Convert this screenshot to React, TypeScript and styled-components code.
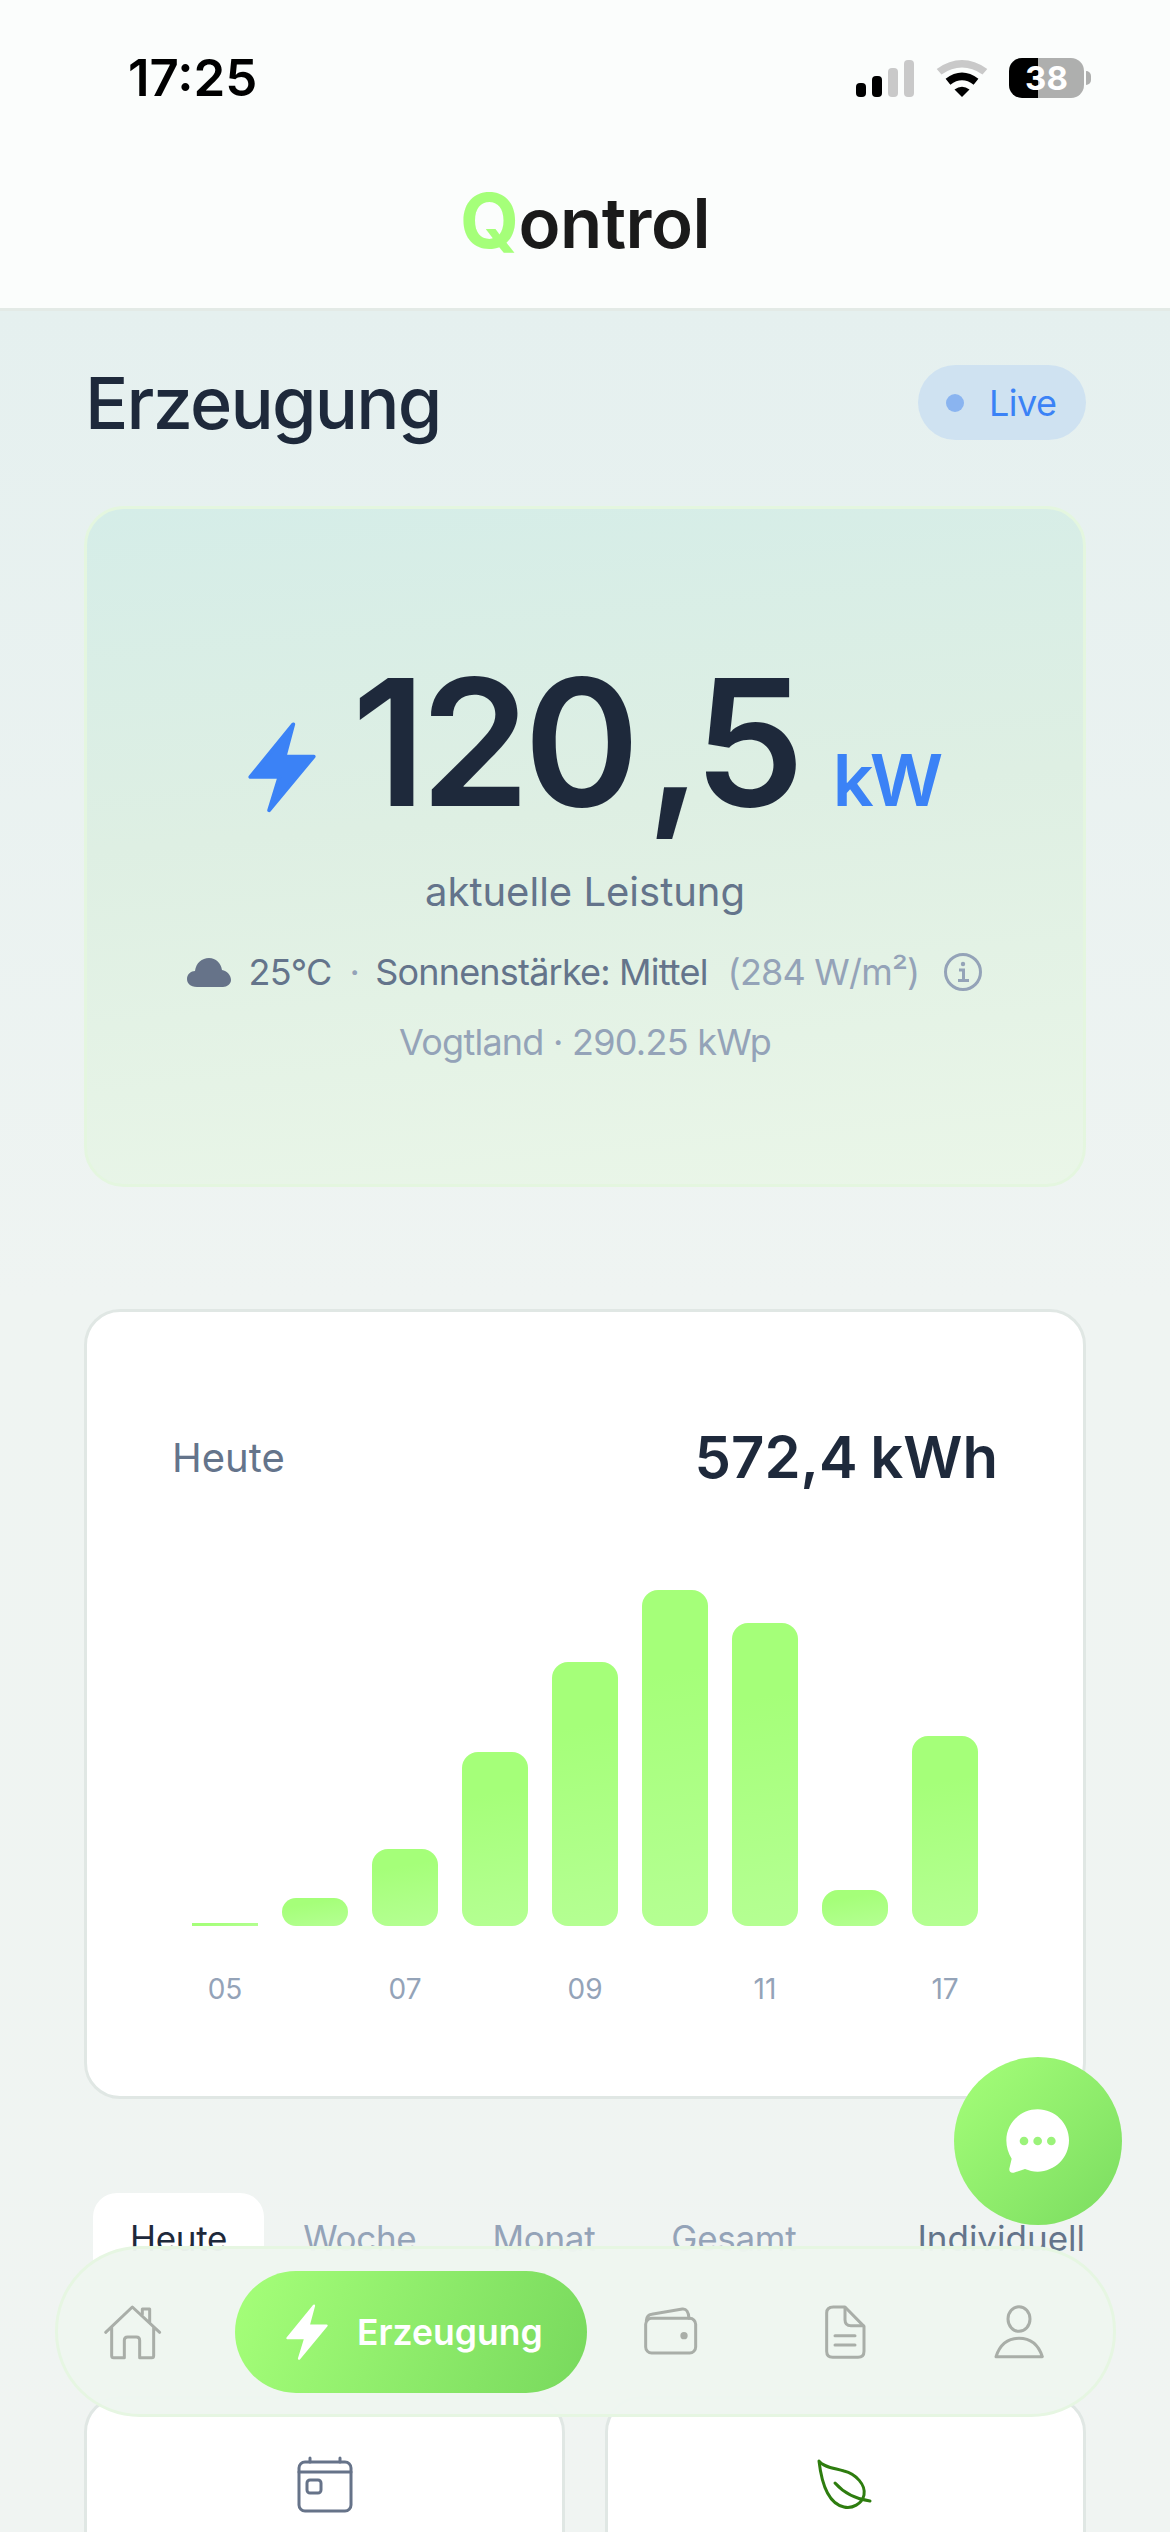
import React from "react";
import styled, { createGlobalStyle } from "styled-components";

const Global = createGlobalStyle`
  html, body { margin: 0; padding: 0; background: #EFF4F2; }
  * { box-sizing: border-box; }
  body { font-family: "Inter", "Liberation Sans", sans-serif; }
`;

const Screen = styled.div`
  position: relative;
  width: 1170px;
  height: 2532px;
  overflow: hidden;
  background: linear-gradient(180deg, #e5f0ef 0, #e5f0ef 310px, #eff4f2 1300px, #f0f4f2 100%);
`;

const Header = styled.header`
  height: 311px;
  background: #fbfdfc;
  border-bottom: 3px solid #e3eae6;
  display: flex;
  flex-direction: column;
`;

const StatusBar = styled.div`
  height: 150px;
  padding: 50px 86px 0 128px;
  display: flex;
  justify-content: space-between;
  align-items: flex-start;
`;

const Time = styled.span`
  font-size: 51px;
  line-height: 56px;
  font-weight: 600;
  color: #000;
`;

const StatusIcons = styled.div`
  display: flex;
  align-items: center;
  height: 46px;
  margin-top: 5px;
`;

const SignalSvg = styled.svg`
  width: 60px;
  height: 40px;
`;

const WifiSvg = styled.svg`
  width: 54px;
  height: 40px;
  margin-left: 20px;
`;

const Battery = styled.div`
  position: relative;
  margin-left: 20px;
  width: 75px;
  height: 40px;
  border-radius: 13px;
  background: linear-gradient(90deg, #000 39%, #aeafae 39%);
  color: #fff;
  font-size: 33px;
  line-height: 40px;
  font-weight: 700;
  text-align: center;
  &::after {
    content: "";
    position: absolute;
    right: -7px;
    top: 13px;
    width: 5px;
    height: 14px;
    border-radius: 0 7px 7px 0;
    background: #aeafae;
  }
`;

const Logo = styled.div`
  text-align: center;
  font-size: 69px;
  line-height: 80px;
  font-weight: 600;
  color: #1a1a1a;
  letter-spacing: -0.5px;
  margin-top: 30px;
`;

const LogoQ = styled.span`
  color: #a5ff79;
  font-size: 76px;
  font-weight: 700;
`;

const Main = styled.main`
  padding: 0 84px;
`;

const TitleRow = styled.div`
  display: flex;
  justify-content: space-between;
  align-items: center;
  height: 75px;
  margin-top: 54px;
  padding-left: 1px;
`;

const Title = styled.h1`
  margin: 0;
  font-size: 72px;
  font-weight: 500;
  color: #1e293b;
  letter-spacing: -1.8px;
`;

const LivePill = styled.div`
  width: 168px;
  height: 75px;
  border-radius: 38px;
  background: #cfe2f1;
  display: flex;
  align-items: center;
  padding-left: 28px;
  gap: 25px;
  color: #3b82f6;
  font-size: 36px;
  letter-spacing: -0.5px;
`;

const LiveDot = styled.span`
  width: 18px;
  height: 18px;
  border-radius: 50%;
  background: #8ab4f0;
`;

const HeroCard = styled.section`
  margin-top: 66px;
  height: 681px;
  border: 3px solid #e4f6df;
  border-radius: 40px;
  background: linear-gradient(175deg, #d5ede8 0%, #deefe3 45%, #eaf6e8 100%);
  display: flex;
  flex-direction: column;
  align-items: center;
  padding-top: 138px;
`;

const ValueRow = styled.div`
  display: flex;
  align-items: baseline;
  height: 190px;
  padding-left: 15px;
`;

const BoltHero = styled.svg`
  width: 72px;
  height: 94px;
  align-self: center;
  margin: 50px 34px 0 0;
`;

const Value = styled.span`
  font-size: 176px;
  line-height: 190px;
  font-weight: 600;
  color: #1e293b;
  letter-spacing: -6px;
`;

const Comma = styled.span`
  margin: 0 -2px 0 12px;
`;

const Unit = styled.span`
  font-size: 72px;
  font-weight: 600;
  color: #3b82f6;
  margin-left: 34px;
  letter-spacing: -4px;
`;

const Subtitle = styled.div`
  margin-top: 30px;
  font-size: 40px;
  line-height: 50px;
  color: #64748b;
`;

const WeatherRow = styled.div`
  margin-top: 32px;
  display: flex;
  align-items: center;
  font-size: 36px;
  line-height: 46px;
  color: #64748b;
  letter-spacing: -0.8px;
`;

const CloudSvg = styled.svg`
  width: 44px;
  height: 32px;
  margin-right: 18px;
`;

const Sep = styled.span`
  color: #94a3b8;
  margin: 0 16px 0 18px;
`;

const Muted = styled.span`
  color: #94a3b8;
  margin-left: 20px;
`;

const InfoSvg = styled.svg`
  width: 40px;
  height: 40px;
  margin-left: 24px;
`;

const Location = styled.div`
  margin-top: 24px;
  font-size: 36px;
  line-height: 46px;
  color: #94a3b8;
  letter-spacing: -0.75px;
`;

const ChartCard = styled.section`
  margin-top: 122px;
  height: 790px;
  border: 3px solid #e0e7e4;
  border-radius: 36px;
  background: #fff;
  padding: 115px 85px 0;
`;

const ChartHead = styled.div`
  display: flex;
  justify-content: space-between;
  align-items: center;
  height: 60px;
`;

const ChartLabel = styled.span`
  font-size: 40px;
  color: #64748b;
`;

const ChartTotal = styled.span`
  font-size: 58px;
  font-weight: 600;
  color: #1e293b;
  word-spacing: -2px;
`;

const Bars = styled.div`
  height: 358px;
  margin-top: 81px;
  padding: 0 20px;
  display: grid;
  grid-template-columns: repeat(9, 66px);
  justify-content: space-between;
  align-items: end;
`;

const Bar = styled.div<{ $h: number }>`
  height: ${(p) => p.$h}px;
  border-radius: ${(p) => (p.$h < 5 ? 0 : 16)}px;
  background: linear-gradient(170deg, #a5ff79 25%, #b5ff93 100%);
`;

const Labels = styled.div`
  margin-top: 45px;
  padding: 0 20px;
  display: grid;
  grid-template-columns: repeat(9, 66px);
  justify-content: space-between;
`;

const HourLabel = styled.span`
  text-align: center;
  font-size: 28px;
  line-height: 36px;
  color: #94a3b8;
`;

const TabRow = styled.div`
  margin-top: 94px;
  padding-left: 9px;
  display: flex;
  align-items: flex-start;
  height: 203px;
`;

const Tab = styled.div<{ $active?: boolean }>`
  padding: 21px 37px;
  margin-right: 2px;
  height: 100px;
  border-radius: 24px;
  font-size: 35px;
  line-height: 48px;
  letter-spacing: -0.3px;
  background: ${(p) => (p.$active ? "#fff" : "transparent")};
  color: ${(p) => (p.$active ? "#1e293b" : "#94a3b8")};
`;

const CustomTab = styled(Tab)`
  margin: 0 0 0 auto;
  padding-right: 1px;
  letter-spacing: 0;
  color: #64748b;
`;

const StatGrid = styled.div`
  display: grid;
  grid-template-columns: 481px 481px;
  justify-content: space-between;
`;

const StatCard = styled.div`
  height: 300px;
  border: 3px solid #e0e7e4;
  border-radius: 36px;
  background: #fff;
  display: flex;
  justify-content: center;
  padding-top: 56px;
`;

const StatIcon = styled.svg`
  width: 60px;
  height: 60px;
`;

const Fab = styled.button`
  position: absolute;
  left: 954px;
  top: 2057px;
  width: 168px;
  height: 168px;
  border: 0;
  padding: 0;
  border-radius: 50%;
  background: linear-gradient(135deg, #a5ff79 0%, #7bdc60 100%);
  display: flex;
  align-items: center;
  justify-content: center;
`;

const FabIcon = styled.svg`
  width: 70px;
  height: 70px;
`;

const Nav = styled.nav`
  position: absolute;
  left: 55px;
  top: 2246px;
  width: 1061px;
  height: 171px;
  border: 3px solid #e6f6e2;
  border-radius: 85px;
  background: rgba(238, 246, 239, 0.97);
  display: flex;
  align-items: center;
  padding-left: 45px;
`;

const NavIcon = styled.svg<{ $w: number; $ml?: number }>`
  width: ${(p) => p.$w}px;
  height: 60px;
  margin: 3px 0 0 ${(p) => p.$ml ?? 0}px;
  flex: none;
`;

const ActivePill = styled.div`
  width: 352px;
  height: 122px;
  margin-left: 70px;
  border-radius: 61px;
  background: linear-gradient(110deg, #a5ff79 0%, #78d95d 100%);
  display: flex;
  align-items: center;
  padding-left: 50px;
  gap: 28px;
  color: #fff;
  font-size: 35.5px;
  font-weight: 600;
`;

const PillLabel = styled.span`
  padding-top: 2px;
`;

const Bolt = styled.svg`
  width: 44px;
  height: 58px;
`;

const boltPath = "M672 48 L592 146 H646 L627 208 L710 108 H656 Z";

const bars = [3, 28, 77, 174, 264, 336, 303, 36, 190];
const hours = ["05", "", "07", "", "09", "", "11", "", "17"];

const grey = { fill: "none", stroke: "#a9aea8", strokeWidth: 9, strokeLinecap: "round", strokeLinejoin: "round" } as const;
const slate = { fill: "none", stroke: "#667389", strokeWidth: 3, strokeLinecap: "round", strokeLinejoin: "round" } as const;

export default function App() {
  return (
    <Screen>
      <Global />
      <Header>
        <StatusBar>
          <Time>17:25</Time>
          <StatusIcons>
            <SignalSvg viewBox="0 0 60 40">
              <rect x="1" y="25" width="10" height="14" rx="4" fill="#000" />
              <rect x="17" y="18" width="10" height="21" rx="4" fill="#000" />
              <rect x="33" y="10" width="10" height="29" rx="4" fill="#c9c9c9" />
              <rect x="49" y="2" width="10" height="37" rx="4" fill="#c9c9c9" />
            </SignalSvg>
            <WifiSvg viewBox="345 55 158 115">
              <path d="M350 86 Q424 34 498 86 L484 102 Q424 62 364 102 Z" fill="#c9c9c9" />
              <path d="M376 115 Q424 78 472 115 L458 132 Q424 106 390 132 Z" fill="#000" />
              <path d="M402 146 Q424 130 446 146 L424 168 Z" fill="#000" />
            </WifiSvg>
            <Battery>38</Battery>
          </StatusIcons>
        </StatusBar>
        <Logo>
          <LogoQ>Q</LogoQ>ontrol
        </Logo>
      </Header>
      <Main>
        <TitleRow>
          <Title>Erzeugung</Title>
          <LivePill>
            <LiveDot />
            Live
          </LivePill>
        </TitleRow>
        <HeroCard>
          <ValueRow>
            <BoltHero viewBox="585 40 132 175">
              <path d={boltPath} fill="#3b82f6" stroke="#3b82f6" strokeWidth="7" strokeLinejoin="round" />
            </BoltHero>
            <Value>
              120<Comma>,</Comma>5
            </Value>
            <Unit>kW</Unit>
          </ValueRow>
          <Subtitle>aktuelle Leistung</Subtitle>
          <WeatherRow>
            <CloudSvg viewBox="0 0 44 32">
              <path d="M10 31 C3 31 0 27 0 23 C0 18 4 15 8 15 C9 7 15 2 22 2 C29 2 34 7 35 14 C40 15 44 19 44 24 C44 28 40 31 36 31 Z" fill="#667389" />
            </CloudSvg>
            25°C
            <Sep>·</Sep>
            Sonnenstärke: Mittel
            <Muted>(284 W/m²)</Muted>
            <InfoSvg viewBox="0 0 40 40">
              <circle cx="20" cy="20" r="17.5" fill="none" stroke="#94a3b8" strokeWidth="3" />
              <circle cx="20" cy="12" r="2.2" fill="#94a3b8" />
              <path d="M16 18 H20.5 V28 M15 28.5 H26" fill="none" stroke="#94a3b8" strokeWidth="3" />
            </InfoSvg>
          </WeatherRow>
          <Location>Vogtland · 290.25 kWp</Location>
        </HeroCard>
        <ChartCard>
          <ChartHead>
            <ChartLabel>Heute</ChartLabel>
            <ChartTotal>572,4 kWh</ChartTotal>
          </ChartHead>
          <Bars>
            {bars.map((h, i) => (
              <Bar key={i} $h={h} />
            ))}
          </Bars>
          <Labels>
            {hours.map((h, i) => (
              <HourLabel key={i}>{h}</HourLabel>
            ))}
          </Labels>
        </ChartCard>
        <TabRow>
          <Tab $active>Heute</Tab>
          <Tab>Woche</Tab>
          <Tab>Monat</Tab>
          <Tab>Gesamt</Tab>
          <CustomTab>Individuell</CustomTab>
        </TabRow>
        <StatGrid>
          <StatCard>
            <StatIcon viewBox="0 0 60 60">
              <rect x="4" y="7" width="52" height="49" rx="6" {...slate} />
              <path d="M4 17 H56 M15 3 V7 M45 3 V7" {...slate} />
              <rect x="12" y="25" width="14" height="13" rx="3" {...slate} />
            </StatIcon>
          </StatCard>
          <StatCard>
            <StatIcon viewBox="0 0 60 60">
              <path d="M3 6 C7 12 18 13 28 16 C40 19 50 30 48 40 C46 49 36 54 28 52 C14 49 6 32 3 6 Z" fill="none" stroke="#2e7d0f" strokeWidth="3" strokeLinejoin="round" />
              <path d="M19 28 C27 37 40 44 54 46" fill="none" stroke="#2e7d0f" strokeWidth="3" strokeLinecap="round" />
            </StatIcon>
          </StatCard>
        </StatGrid>
      </Main>
      <Fab>
        <FabIcon viewBox="130 140 210 210">
          <path d="M234 150 C286 150 328 192 328 243 C328 295 286 337 234 337 C220 337 208 334 196 329 L162 340 Q148 342 149 328 L156 298 C146 282 140 263 140 243 C140 192 182 150 234 150 Z" fill="#fff" />
          <circle cx="193" cy="245" r="13" fill="#9bf37a" />
          <circle cx="234" cy="245" r="13" fill="#9bf37a" />
          <circle cx="275" cy="245" r="13" fill="#9bf37a" />
        </FabIcon>
      </Fab>
      <Nav>
        <NavIcon $w={62} viewBox="40 40 186 180">
          <path d="M48 128 L128 52 L210 128 M158 74 V58 H180 V98 M66 112 V198 Q66 204 72 204 H104 V152 Q104 142 114 142 H140 Q150 142 150 152 V204 H186 Q192 204 192 198 V112" {...grey} />
        </NavIcon>
        <ActivePill>
          <Bolt viewBox="585 40 132 175">
            <path d={boltPath} fill="#fff" stroke="#fff" strokeWidth="7" strokeLinejoin="round" />
          </Bolt>
          <PillLabel>Erzeugung</PillLabel>
        </ActivePill>
        <NavIcon $w={60} $ml={56} viewBox="40 40 180 180">
          <rect x="48" y="86" width="150" height="104" rx="18" {...grey} />
          <path d="M50 92 Q52 76 66 74 L158 58 Q176 56 178 86" {...grey} />
          <circle cx="163" cy="138" r="11" fill="#a9aea8" />
        </NavIcon>
        <NavIcon $w={60} $ml={112} viewBox="555 40 180 180">
          <path d="M610 52 H645 L702 110 V185 Q702 203 684 203 H608 Q590 203 590 185 V70 Q590 52 610 52 Z" {...grey} />
          <path d="M645 55 V90 Q645 108 663 108 H700 M615 138 H675 M615 166 H675" {...grey} />
        </NavIcon>
        <NavIcon $w={60} $ml={114} viewBox="1077 40 180 180">
          <ellipse cx="1167" cy="88" rx="33" ry="37" {...grey} />
          <path d="M1098 201 C1110 165 1135 146 1167 146 C1200 146 1225 165 1237 201 Z" {...grey} />
        </NavIcon>
      </Nav>
    </Screen>
  );
}
